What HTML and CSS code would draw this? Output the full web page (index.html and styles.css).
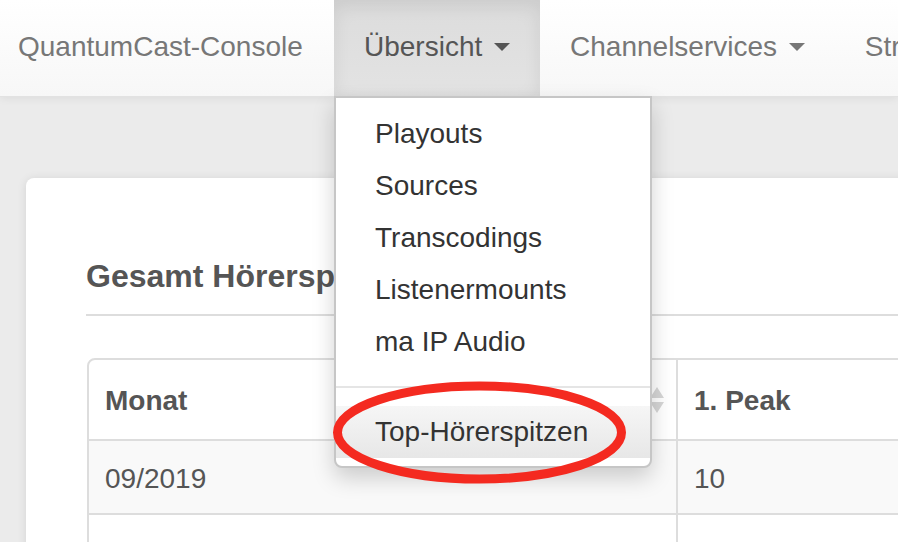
FILE: index.html
```html
<!DOCTYPE html>
<html lang="de">
<head>
<meta charset="utf-8">
<title>QuantumCast-Console</title>
<link rel="stylesheet" href="styles.css">
</head>
<body>
<nav class="navbar">
  <a class="brand" href="#">QuantumCast-Console</a>
  <ul class="nav">
    <li class="nav-item active">
      <a href="#">Übersicht <span class="caret"></span></a>
      <ul class="dropdown">
        <li><a href="#">Playouts</a></li>
        <li><a href="#">Sources</a></li>
        <li><a href="#">Transcodings</a></li>
        <li><a href="#">Listenermounts</a></li>
        <li><a href="#">ma IP Audio</a></li>
        <li class="divider"></li>
        <li class="hover"><a href="#">Top-Hörerspitzen</a></li>
      </ul>
      <svg class="mark" width="300" height="110" viewBox="0 0 300 110">
        <ellipse cx="148.5" cy="52.5" rx="142" ry="46.5" fill="none" stroke="#f42a20" stroke-width="9"/>
      </svg>
    </li>
    <li class="nav-item"><a href="#">Channelservices <span class="caret"></span></a></li>
    <li class="nav-item"><a href="#">Streams</a></li>
  </ul>
</nav>
<main class="page">
  <section class="card">
    <h3 class="title">Gesamt Hörerspitzen</h3>
    <table class="table">
      <thead>
        <tr>
          <th class="col-month">Monat<svg class="sort" width="14" height="26" viewBox="0 0 14 26"><path d="M7 0 L14 11 L0 11 Z M0 15 L14 15 L7 26 Z" fill="#d6d6d6"/></svg></th>
          <th>1. Peak</th>
        </tr>
      </thead>
      <tbody>
        <tr class="odd"><td>09/2019</td><td>10</td></tr>
        <tr><td>&nbsp;</td><td>&nbsp;</td></tr>
      </tbody>
    </table>
  </section>
</main>
</body>
</html>
```

FILE: styles.css
```css
html, body {
  margin: 0;
  padding: 0;
  height: 100%;
  overflow: hidden;
}
body {
  background: #ebebeb;
  font-family: "Liberation Sans", Arial, Helvetica, sans-serif;
  color: #555;
}
a { text-decoration: none; color: inherit; }
ul { list-style: none; margin: 0; padding: 0; }

.navbar {
  position: relative;
  z-index: 5;
  display: flex;
  height: 96px;
  background: linear-gradient(#ffffff, #f7f7f7);
  border-bottom: 1px solid #e2e2e2;
  box-shadow: 0 2px 8px rgba(0,0,0,0.06);
  white-space: nowrap;
}
.brand {
  display: block;
  box-sizing: border-box;
  width: 334px;
  padding-left: 18px;
  font-size: 28px;
  line-height: 93px;
  color: #777;
  flex-shrink: 0;
}
.nav {
  display: flex;
  flex-shrink: 0;
}
.nav-item {
  position: relative;
  height: 96px;
}
.nav-item > a {
  display: block;
  padding: 0 30px;
  height: 96px;
  font-size: 28px;
  line-height: 93px;
  color: #777;
}
.nav-item.active > a {
  color: #555;
  background: linear-gradient(#dcdcdc, #e3e3e3);
  box-shadow: inset 0 6px 18px rgba(0,0,0,0.08);
}
.caret {
  display: inline-block;
  width: 0;
  height: 0;
  margin-left: 4px;
  vertical-align: 5px;
  border-top: 8px solid #777;
  border-left: 8.5px solid transparent;
  border-right: 8.5px solid transparent;
}
.active .caret { border-top-color: #555; }

.dropdown {
  position: absolute;
  left: 0;
  top: 96px;
  width: 318px;
  box-sizing: border-box;
  background: #fff;
  border: 2px solid #c6c6c6;
  border-radius: 0 0 8px 8px;
  padding: 10px 0 8px;
  box-shadow: 0 10px 22px rgba(0,0,0,0.18);
  z-index: 6;
}
.dropdown li a {
  display: block;
  padding: 0 39px;
  font-size: 28px;
  line-height: 52px;
  color: #333;
}
.dropdown .divider {
  height: 2px;
  margin: 18px 0;
  background: #e5e5e5;
}
.dropdown .hover a {
  background: linear-gradient(#f6f6f6, #e7e7e7);
}
.mark {
  position: absolute;
  left: -3px;
  top: 380px;
  z-index: 7;
}

.page {
  padding: 81px 0 0 26px;
}
.card {
  width: 1000px;
  background: #fff;
  border-radius: 8px;
  box-shadow: 0 1px 10px rgba(0,0,0,0.1);
  padding: 81px 60px 60px;
}
.title {
  margin: 0;
  font-size: 32px;
  line-height: 34px;
  font-weight: bold;
  color: #555;
  padding-bottom: 21px;
  border-bottom: 2px solid #dddddd;
}
.table {
  margin-top: 42px;
  margin-left: 1px;
  width: 940px;
  border-collapse: separate;
  border-spacing: 0;
  border: 2px solid #dddddd;
  border-radius: 8px;
  font-size: 28px;
  line-height: 40px;
  color: #555;
}
.table th, .table td {
  text-align: left;
  padding: 18px 16px 14px;
  border-top: 2px solid #dddddd;
}
.table th {
  border-top: 0;
  padding: 21px 12px 18px 16px;
  font-weight: bold;
}
.table th + th, .table td + td {
  border-left: 2px solid #dddddd;
}
.col-month {
  width: 559px;
}
.sort {
  float: right;
  margin-top: 6px;
}
.table tr.odd td {
  background: #f9f9f9;
}
```
